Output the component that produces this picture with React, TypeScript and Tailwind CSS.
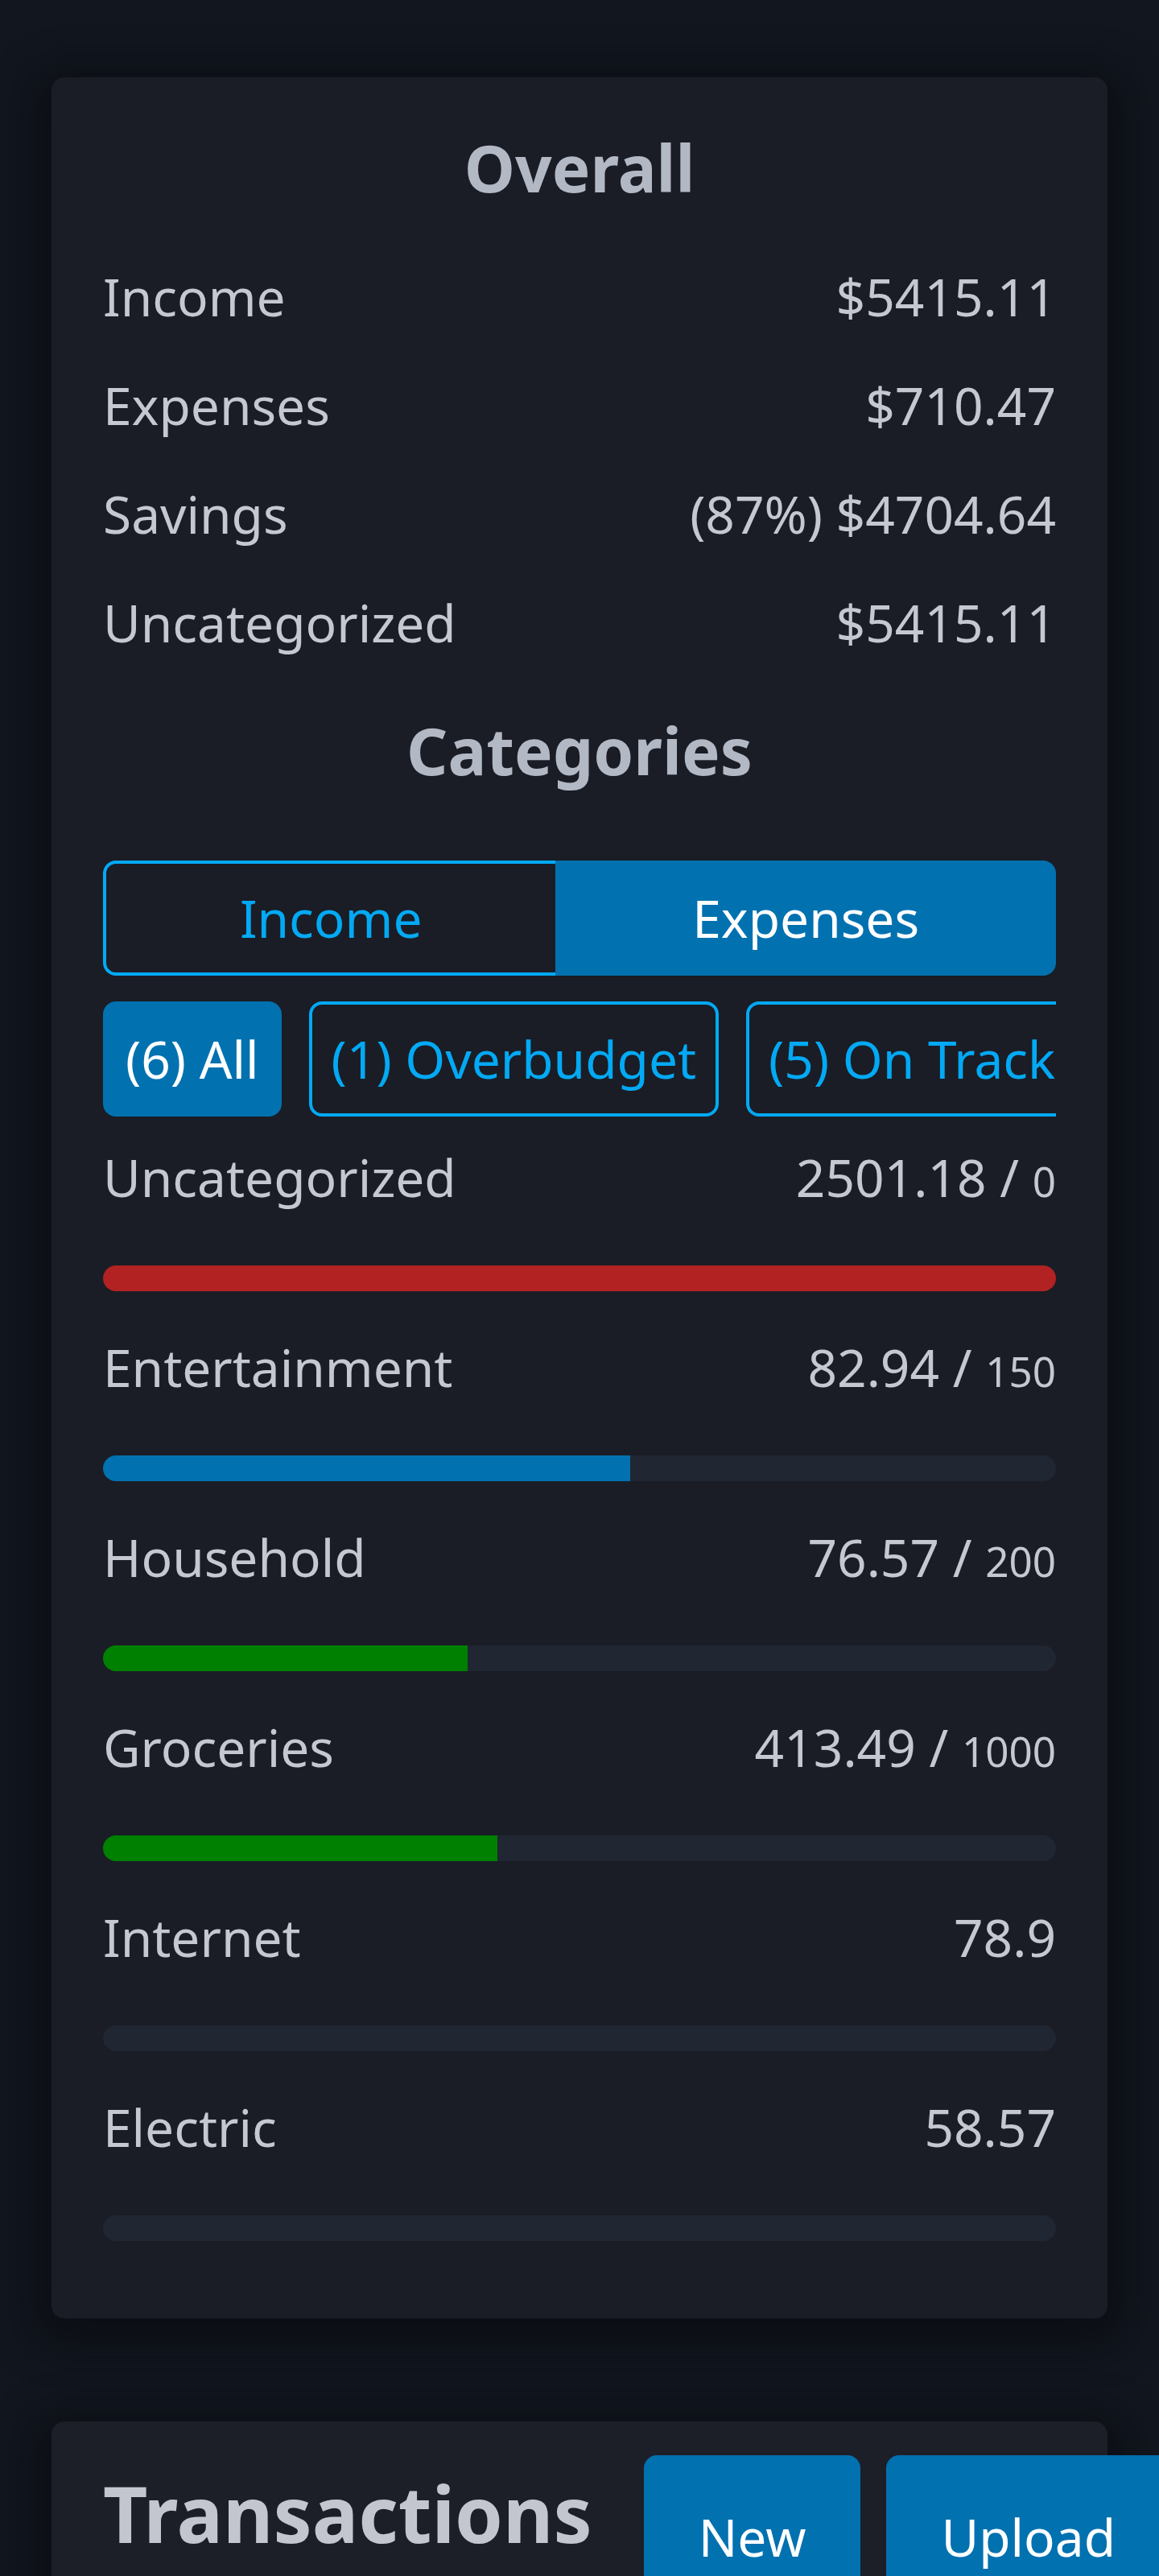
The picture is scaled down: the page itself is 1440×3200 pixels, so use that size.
import { useState } from 'react'

type Category = {
  name: string
  spent: number
  budget?: number
  bar: string
}

const overall = [
  { label: 'Income', value: '$5415.11' },
  { label: 'Expenses', value: '$710.47' },
  { label: 'Savings', value: '(87%) $4704.64' },
  { label: 'Uncategorized', value: '$5415.11' },
]

const categories: Category[] = [
  { name: 'Uncategorized', spent: 2501.18, budget: 0, bar: 'bg-[#b22222]' },
  { name: 'Entertainment', spent: 82.94, budget: 150, bar: 'bg-[#0271b0]' },
  { name: 'Household', spent: 76.57, budget: 200, bar: 'bg-[#008000]' },
  { name: 'Groceries', spent: 413.49, budget: 1000, bar: 'bg-[#008000]' },
  { name: 'Internet', spent: 78.9, bar: 'bg-[#008000]' },
  { name: 'Electric', spent: 58.57, bar: 'bg-[#008000]' },
]

function pct(c: Category) {
  if (c.budget === undefined) return 0
  if (c.budget === 0) return 100
  return Math.min(100, (c.spent / c.budget) * 100)
}

export default function App() {
  const [tab, setTab] = useState<'income' | 'expenses'>('expenses')
  const [filter, setFilter] = useState('all')

  const filters = [
    { id: 'all', label: '(6) All' },
    { id: 'over', label: '(1) Overbudget' },
    { id: 'track', label: '(5) On Track' },
  ]

  return (
    <div className="min-h-screen overflow-x-hidden bg-[#12161e] pb-40 pt-24 font-['Noto_Sans',sans-serif] text-[#c5c8d0]">
      <section className="mx-16 rounded-2xl bg-[#1a1d25] px-16 pb-24 pt-16 shadow-[0_12px_50px_24px_rgba(4,7,12,0.45)]">
        <h2 className="text-center text-[80px] font-bold leading-[1.2] text-[#b3b8c5]">Overall</h2>

        <div className="mt-[45px]">
          {overall.map((r) => (
            <div key={r.label} className="flex justify-between text-[64px] leading-[135px]">
              <span>{r.label}</span>
              <span>{r.value}</span>
            </div>
          ))}
        </div>

        <h2 className="mt-[43px] text-center text-[80px] font-bold leading-[1.2] text-[#b3b8c5]">Categories</h2>

        <div className="mt-[89px] flex text-[64px] leading-[87px]">
          <button
            onClick={() => setTab('income')}
            className={`flex-auto rounded-l-2xl border-4 border-r-0 py-6 ${
              tab === 'income'
                ? 'border-[#0271b0] bg-[#0271b0] text-white'
                : 'border-[#03a9f4] text-[#03a9f4]'
            }`}
          >
            Income
          </button>
          <button
            onClick={() => setTab('expenses')}
            className={`flex-auto rounded-r-2xl border-4 py-6 ${
              tab === 'expenses'
                ? 'border-[#0271b0] bg-[#0271b0] text-white'
                : 'border-[#03a9f4] text-[#03a9f4]'
            }`}
          >
            Expenses
          </button>
        </div>

        <div className="mt-8 flex gap-[34px] overflow-hidden text-[64px] leading-[87px]">
          {filters.map((f) => (
            <button
              key={f.id}
              onClick={() => setFilter(f.id)}
              className={`shrink-0 whitespace-nowrap rounded-2xl border-4 px-6 py-6 ${
                filter === f.id
                  ? 'border-[#0271b0] bg-[#0271b0] text-white'
                  : 'border-[#03a9f4] text-[#03a9f4]'
              }`}
            >
              {f.label}
            </button>
          ))}
        </div>

        <div className="mt-8 flex flex-col gap-[51px]">
          {categories.map((c) => (
            <div key={c.name}>
              <div className="flex h-[87px] justify-between text-[64px] leading-[87px]">
                <span>{c.name}</span>
                <span>
                  {c.spent}
                  {c.budget !== undefined && (
                    <>
                      {' / '}
                      <span className="text-[0.8em] leading-none">{c.budget}</span>
                    </>
                  )}
                </span>
              </div>
              <div className="mt-[66px] h-8 overflow-hidden rounded-full bg-[#212633]">
                <div className={`h-full ${c.bar}`} style={{ width: `${pct(c)}%` }} />
              </div>
            </div>
          ))}
        </div>
      </section>

      <section className="mx-16 mt-32 rounded-2xl bg-[#1c1f27] px-16 pb-16 pt-[42px] shadow-[0_12px_50px_24px_rgba(4,7,12,0.45)]">
        <div className="flex items-start gap-16">
          <h2 className="shrink-0 whitespace-nowrap text-[96px] font-bold text-[#c3c6ce]">Transactions</h2>
          <div className="flex shrink-0 gap-8">
            <button className="whitespace-nowrap rounded-2xl border-4 border-[#0271b0] bg-[#0271b0] px-16 pb-6 pt-[54px] text-[64px] leading-[87px] text-white">
              New
            </button>
            <button className="whitespace-nowrap rounded-2xl border-4 border-[#0271b0] bg-[#0271b0] px-16 pb-6 pt-[54px] text-[64px] leading-[87px] text-white">
              Upload
            </button>
          </div>
        </div>
      </section>
    </div>
  )
}
